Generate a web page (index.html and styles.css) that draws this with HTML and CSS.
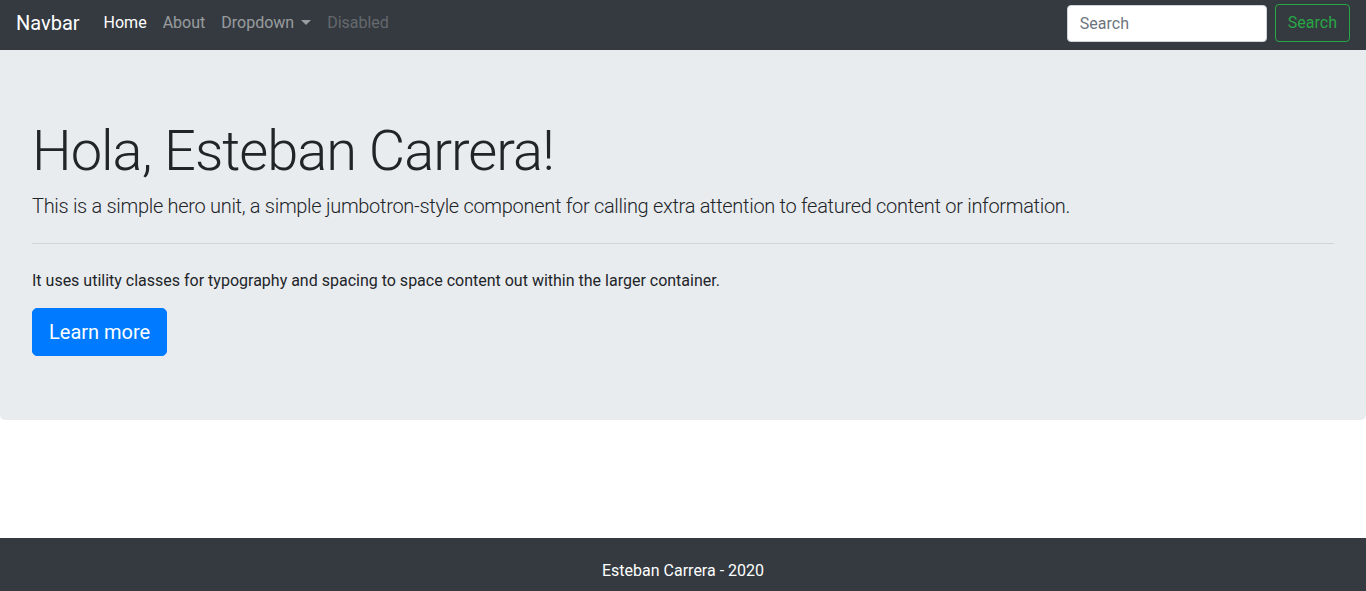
FILE: index.html
```html
<!DOCTYPE html>
<html lang="es">
<head>
<meta charset="utf-8">
<title>Hola</title>
<link rel="stylesheet" href="styles.css">
</head>
<body>
<div class="page">
  <nav class="navbar">
    <a class="brand" href="#">Navbar</a>
    <ul class="nav">
      <li><a class="nav-link active" href="#">Home</a></li>
      <li><a class="nav-link" href="#">About</a></li>
      <li><a class="nav-link dropdown" href="#">Dropdown<span class="caret"></span></a></li>
      <li><a class="nav-link disabled" href="#">Disabled</a></li>
    </ul>
    <form class="search">
      <input class="search-input" type="search" placeholder="Search">
      <button class="search-btn" type="button">Search</button>
    </form>
  </nav>
  <main class="jumbotron">
    <h1 class="display">Hola, Esteban Carrera!</h1>
    <p class="lead">This is a simple hero unit, a simple jumbotron-style component for calling extra attention to featured content or information.</p>
    <hr class="rule">
    <p class="text">It uses utility classes for typography and spacing to space content out within the larger container.</p>
    <a class="btn-primary" href="#">Learn more</a>
  </main>
  <footer class="footer">Esteban Carrera - 2020</footer>
</div>
</body>
</html>
```
FILE: styles.css
```css
* { box-sizing: border-box; }
html, body { margin: 0; padding: 0; }
body {
  font-family: Roboto, "Liberation Sans", sans-serif;
  font-size: 16px;
  line-height: 1.5;
  color: #212529;
  background: #fff;
}
.page {
  min-height: 100vh;
  display: flex;
  flex-direction: column;
}
.navbar {
  height: 50px;
  background: #343a40;
  display: flex;
  align-items: flex-start;
  padding: 3px 16px 0;
}
.brand {
  color: #fff;
  font-size: 20px;
  text-decoration: none;
  margin-right: 16px;
  line-height: 40px;
}
.nav {
  list-style: none;
  margin: 0;
  padding: 0;
  display: flex;
  flex: 1;
}
.nav-link {
  display: flex;
  align-items: center;
  height: 40px;
  padding: 0 8px;
  color: rgba(255,255,255,.5);
  text-decoration: none;
}
.nav-link.active { color: #fff; }
.nav-link.disabled { color: rgba(255,255,255,.25); }
.caret {
  display: inline-block;
  margin-left: 7px;
  width: 0; height: 0;
  border-top: 5px solid rgba(255,255,255,.5);
  border-left: 5px solid transparent;
  border-right: 5px solid transparent;
  margin-top: -2px;
}
.search {
  display: flex;
  align-items: center;
  gap: 8px;
  margin-top: 1px;
}
.search-input {
  width: 200px;
  height: 37px;
  padding: 6px 12px;
  font: inherit;
  font-size: 16px;
  color: #495057;
  background: #fff;
  border: 1px solid #ced4da;
  border-radius: 4px;
}
.search-input::placeholder { color: #6c757d; }
.search-btn {
  height: 38px;
  padding: 6px 12px;
  font: inherit;
  font-size: 16px;
  color: #28a745;
  background: transparent;
  border: 1px solid #28a745;
  border-radius: 4px;
}
.jumbotron {
  background: #e9ecef;
  padding: 64px 32px;
  border-radius: 0 0 5px 5px;
  margin-bottom: 32px;
}
.display {
  font-size: 56px;
  font-weight: 300;
  line-height: 1.2;
  letter-spacing: -1px;
  padding-top: 4px;
  margin: 0 0 6px;
}
.lead {
  font-size: 20px;
  font-weight: 300;
  letter-spacing: -0.3px;
  margin: 0;
}
.rule {
  border: 0;
  border-top: 1px solid rgba(0,0,0,.1);
  margin: 22px 0 24px;
}
.text {
  margin: 0 0 16px;
  padding-top: 1px;
}
.btn-primary {
  display: inline-block;
  background: #007bff;
  border: 1px solid #007bff;
  color: #fff;
  text-decoration: none;
  font-size: 20px;
  line-height: 1.5;
  padding: 8px 16px;
  border-radius: 5px;
  margin-top: -1px;
}
.footer {
  margin-top: auto;
  background: #343a40;
  color: #fff;
  text-align: center;
  height: 53px;
  padding-top: 21px;
}
```
